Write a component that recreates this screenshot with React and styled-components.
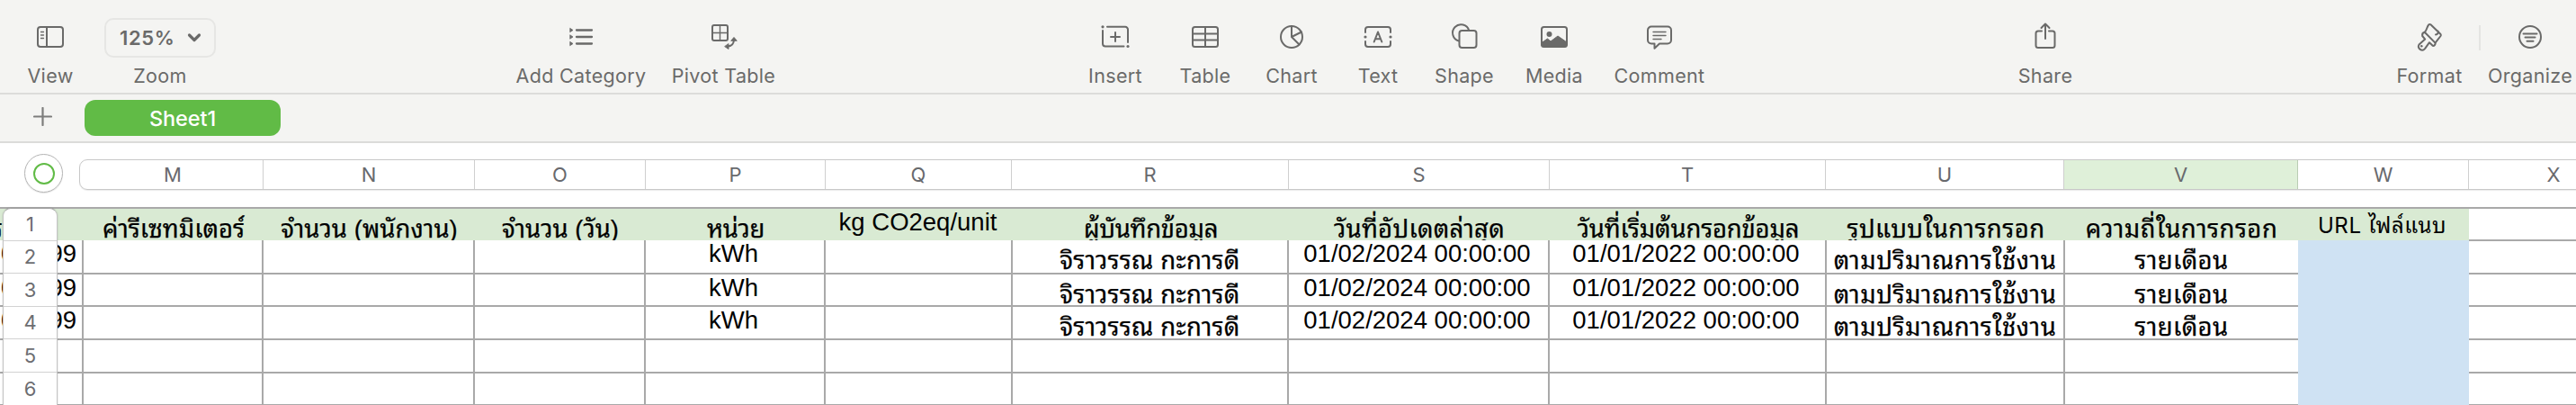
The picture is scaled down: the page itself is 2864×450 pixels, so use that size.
import React from "react";
import styled, { createGlobalStyle } from "styled-components";

const INK = "#6a6a69";
const UI = '"Inter", "Noto Sans Thai Looped", "Liberation Sans", sans-serif';
const CELL = '"Liberation Sans", "Noto Sans Thai Looped", "Noto Sans Thai", sans-serif';

const Global = createGlobalStyle`
  * { box-sizing: border-box; }
  body { margin: 0; background: #fff; overflow: hidden; }
`;

const Window = styled.main`
  width: 2864px;
  height: 450px;
  overflow: hidden;
  background: #fff;
  font-family: ${UI};
`;

const Toolbar = styled.header`
  height: 105px;
  display: flex;
  background: #f4f4f2;
  border-bottom: 2px solid #dcdcda;
`;

const ToolItem = styled.div`
  width: ${(p) => p.$w}px;
  margin-left: ${(p) => p.$gap}px;
  flex: none;
  display: flex;
  flex-direction: column;
  align-items: center;
`;

const IconSlot = styled.div`
  height: 72px;
  padding-top: 20px;
  flex: none;
  svg { display: block; }
`;

const Label = styled.span`
  font-size: 21.5px;
  line-height: 25px;
  letter-spacing: 0.33px;
  color: ${INK};
  white-space: nowrap;
`;

const ZoomButton = styled.div`
  width: 124px;
  height: 44px;
  border: 2px solid #e6e6e4;
  border-radius: 10px;
  display: flex;
  align-items: center;
  padding-left: 15px;
  gap: 14px;
  font-size: 22px;
  font-weight: 600;
  letter-spacing: 0.6px;
  color: ${INK};
`;

const Divider = styled.i`
  width: 2px;
  height: 28px;
  margin: 28px 0 0 18px;
  flex: none;
  background: #e4e4e2;
`;

const TabBar = styled.nav`
  height: 54px;
  display: flex;
  background: #f4f4f2;
  border-bottom: 2px solid #dcdcda;
`;

const AddTab = styled.svg`
  margin: 14px 0 0 37px;
  flex: none;
`;

const Tab = styled.div`
  width: 218px;
  height: 40px;
  margin: 6px 0 0 36px;
  border-radius: 12px;
  background: #61bb46;
  color: #fff;
  font-size: 23.5px;
  font-weight: 500;
  line-height: 41px;
  letter-spacing: -0.1px;
  text-align: center;
`;

const ColumnBar = styled.div`
  height: 71px;
  display: flex;
  padding-top: 12px;
`;

const TableHandle = styled.div`
  width: 43px;
  height: 43px;
  margin-left: 27px;
  flex: none;
  border: 1px solid #b4b4b4;
  border-radius: 50%;
  display: grid;
  place-items: center;
  box-shadow: 0 1px 1px rgba(0, 0, 0, 0.1);
  &::after {
    content: "";
    width: 20px;
    height: 20px;
    border: 2px solid #61bb46;
    border-radius: 50%;
  }
`;

const ColumnHeads = styled.div`
  height: 34px;
  margin: 6px 0 0 18px;
  flex: none;
  display: flex;
  border: 1px solid #c8c8c8;
  border-radius: 9px 0 0 9px;
  box-shadow: 0 1px 1px rgba(0, 0, 0, 0.08);
`;

const ColumnHead = styled.div`
  width: ${(p) => p.$w}px;
  flex: none;
  border-right: 1px solid ${(p) => (p.$active ? "#b9cdb4" : "#cfcfcf")};
  background: ${(p) => (p.$active ? "#dff0d9" : "transparent")};
  font-size: 22px;
  line-height: 33px;
  text-align: center;
  color: #68696d;
  &:first-child { padding-left: 3px; }
`;

const Sheet = styled.section`
  display: flex;
  height: 220px;
`;

const RowHeads = styled.div`
  width: 61px;
  margin: 1px 0 0 3px;
  flex: none;
  z-index: 2;
  background: #fff;
  border: 1px solid #c4c4c4;
  border-width: 1px 1px 0;
  border-top-color: #a0a0a0;
  border-radius: 9px 9px 0 0;
  box-shadow: 0 0 2px rgba(0, 0, 0, 0.18);
`;

const RowHead = styled.div`
  height: ${(p) => p.$h}px;
  border-bottom: 1px solid #d2d2d2;
  font-size: 22px;
  line-height: ${(p) => p.$h - 1}px;
  text-align: center;
  color: #6c6d71;
`;

const Grid = styled.div`
  width: 3000px;
  margin-left: -64px;
  flex: none;
  border-top: 2px solid #a9a9a9;
`;

const Row = styled.div`
  height: ${(p) => p.$h}px;
  display: flex;
`;

const Cell = styled.div`
  width: ${(p) => p.$w}px;
  height: 100%;
  flex: none;
  overflow: hidden;
  padding-top: ${(p) => p.$drop ?? 0}px;
  padding-right: ${(p) => (p.$thai ? 0 : 3)}px;
  border: 0 solid #a9a9a9;
  border-width: ${(p) => (p.$fill ? "0" : p.$last ? "0 0 2px" : "0 2px 2px 0")};
  background: ${(p) => p.$fill || "#fff"};
  font-family: ${(p) => (p.$ui ? UI : CELL)};
  font-size: ${(p) => p.$size || 27.5}px;
  line-height: 30px;
  letter-spacing: ${(p) => p.$ls || 0}px;
  text-align: center;
  white-space: nowrap;
  color: #000;
  -webkit-text-stroke: ${(p) => (p.$thai ? "0.25px #000" : "0")};
`;

const EdgeCell = styled(Cell)`
  text-align: right;
  padding-right: 6px;
`;

const EdgeHead = styled(Cell)`
  text-align: left;
  text-indent: -10px;
`;

const OpenHead = styled(Cell)`
  height: 36px;
  position: relative;
  z-index: 1;
`;

const line = { fill: "none", stroke: INK, strokeWidth: 2, strokeLinecap: "round", strokeLinejoin: "round" };

const Icon = ({ children }) => (
  <svg width="34" height="40" viewBox="0 0 34 40" {...line}>{children}</svg>
);

const icons = {
  view: (
    <Icon>
      <rect x="3" y="10" width="28" height="22" rx="3" />
      <path d="M13 10v22" />
      <path d="M6.5 15.5h3M6.5 19h3M6.5 22.5h3" strokeWidth="1.3" />
    </Icon>
  ),
  category: (
    <Icon>
      <path d="M12 13.5h17M12 21h17M12 28.5h17" strokeWidth="2.3" />
      <path d="M5 11.5l3 2-3 2zM5 19l3 2-3 2zM5 26.5l3 2-3 2z" fill={INK} strokeWidth="0.8" />
    </Icon>
  ),
  pivot: (
    <Icon>
      <rect x="4" y="8" width="17" height="17" rx="2" />
      <path d="M12.5 8v17M4 16.5h17" strokeWidth="1.4" />
      <path d="M20.5 31.5c5.5 0 7.5-2.5 7.5-8" />
      <path d="M25 25l3-3.5 3 3.5zM22 29v5.5l-4-2.7z" fill={INK} strokeWidth="1" />
    </Icon>
  ),
  insert: (
    <Icon>
      <path d="M8 9.8h20a3 3 0 0 1 3 3V27M3 14v14.5a3 3 0 0 0 3 3h20.5M17 16v10M12 21h10" />
      <circle cx="3" cy="9.8" r="1.6" fill={INK} stroke="none" />
      <circle cx="31" cy="31.5" r="1.6" fill={INK} stroke="none" />
    </Icon>
  ),
  table: (
    <Icon>
      <rect x="3" y="10" width="28" height="22" rx="2.5" />
      <path d="M3 17.5h28M3 24.5h28M17 10v22" />
    </Icon>
  ),
  chart: (
    <Icon>
      <circle cx="17" cy="21" r="12" />
      <path d="M17 9v12l8.5 8.5M17 21l11-5.5" />
    </Icon>
  ),
  text: (
    <Icon>
      <path d="M3 16v-3a3 3 0 0 1 3-3h22a3 3 0 0 1 3 3v3M3 26v3a3 3 0 0 0 3 3h22a3 3 0 0 0 3-3v-3" />
      <circle cx="3" cy="21" r="1.6" fill={INK} stroke="none" />
      <circle cx="31" cy="21" r="1.6" fill={INK} stroke="none" />
      <path d="M12.7 26.5L17 15.5l4.3 11M14.2 23.2h5.6" />
    </Icon>
  ),
  shape: (
    <Icon>
      <path d="M11 25.5a9.3 9.3 0 1 1 11.3-11.5" />
      <rect x="11.5" y="14" width="19" height="19" rx="3" />
    </Icon>
  ),
  media: (
    <Icon>
      <rect x="3" y="10" width="28" height="22" rx="2.5" />
      <circle cx="11.5" cy="18" r="3" fill={INK} stroke="none" />
      <path d="M3 30v-2.5l6.5-4.5 3.5 3 8-6 10 7v3a2 2 0 0 1-2 2H5a2 2 0 0 1-2-2z" fill={INK} strokeWidth="1" />
    </Icon>
  ),
  comment: (
    <Icon>
      <path d="M8 9.5h18a4 4 0 0 1 4 4v11a4 4 0 0 1-4 4H17l-5.5 5.3v-5.3H8a4 4 0 0 1-4-4v-11a4 4 0 0 1 4-4z" />
      <path d="M10 15.5h14M10 19.5h14M10 23.5h9" strokeWidth="1.4" />
    </Icon>
  ),
  share: (
    <Icon>
      <path d="M13 14.5H9a2.5 2.5 0 0 0-2.5 2.5v13.5A2.5 2.5 0 0 0 9 33h16a2.5 2.5 0 0 0 2.5-2.5V17a2.5 2.5 0 0 0-2.5-2.5h-4" />
      <path d="M17 23V6.5M12.5 11L17 6.5l4.5 4.5" />
    </Icon>
  ),
  format: (
    <Icon>
      <path d="M11.7 15.8l11.8 11.8c.6 1.6-1.2 3.7-2.8 3.2L17 27.2l-5 7a4 4 0 0 1-6.5-4.6l6.7-6-3-3.6c-.4-2 .8-3.8 2.5-4.2z" />
      <path d="M11.7 15.8c2.5-2 2.3-5.8 4.5-8.3.8-.8 1.5-.7 2.2-.2L29.5 18c.6.8.5 1.3 0 2l-6 7.6M26.8 14.8c.2 1.5-.6 3.5-2.8 3.7" />
      <circle cx="8.3" cy="31.3" r="1.3" fill={INK} stroke="none" />
    </Icon>
  ),
  organize: (
    <Icon>
      <circle cx="17" cy="21" r="12" />
      <path d="M9.5 17.5h15M11.5 21.5h11M13.5 25.8h7" />
    </Icon>
  ),
};

const tools = [
  { name: "Add Category", icon: "category", w: 144, gap: 334 },
  { name: "Pivot Table", icon: "pivot", w: 115, gap: 29 },
  { name: "Insert", icon: "insert", w: 60, gap: 348 },
  { name: "Table", icon: "table", w: 56, gap: 42 },
  { name: "Chart", icon: "chart", w: 58, gap: 39 },
  { name: "Text", icon: "text", w: 44, gap: 45 },
  { name: "Shape", icon: "shape", w: 66, gap: 41 },
  { name: "Media", icon: "media", w: 62, gap: 36 },
  { name: "Comment", icon: "comment", w: 102, gap: 35 },
  { name: "Share", icon: "share", w: 60, gap: 348 },
  { name: "Format", icon: "format", w: 74, gap: 360 },
];

const columns = [
  { id: "M", w: 200, head: 204, title: "ค่ารีเซทมิเตอร์" },
  { id: "N", w: 235, head: 235, title: "จำนวน (พนักงาน)", titleLs: 0.05 },
  { id: "O", w: 190, head: 190, title: "จำนวน (วัน)" },
  { id: "P", w: 200, head: 200, title: "หน่วย", titleLs: -0.3, value: "kWh" },
  { id: "Q", w: 208, head: 207, title: "kg CO2eq/unit", latin: true },
  { id: "R", w: 307, head: 308, title: "ผู้บันทึกข้อมูล", titleLs: -0.3, value: "จิราวรรณ กะการดี", valueLs: 0.25, thai: true },
  { id: "S", w: 290, head: 290, title: "วันที่อัปเดตล่าสุด", titleLs: 0.25, value: "01/02/2024 00:00:00" },
  { id: "T", w: 308, head: 307, title: "วันที่เริ่มต้นกรอกข้อมูล", titleLs: -0.2, value: "01/01/2022 00:00:00" },
  { id: "U", w: 265, head: 265, title: "รูปแบบในการกรอก", titleLs: 0.45, value: "ตามปริมาณการใช้งาน", valueLs: 0.5, thai: true },
  { id: "V", w: 259, head: 260, title: "ความถี่ในการกรอก", titleLs: 0.5, value: "รายเดือน", valueLs: 0.4, thai: true },
  { id: "W", w: 190, head: 190, title: "URL ไฟล์แนบ", titleLs: 0.6, blue: true },
];

const rows = [
  { n: 2, h: 38, filled: true },
  { n: 3, h: 36, filled: true },
  { n: 4, h: 37, filled: true },
  { n: 5, h: 37 },
  { n: 6, h: 36 },
];

const rowHeadHeights = [36, 36, 37, 36, 37, 37];

const titleDrop = (c) => (c.latin ? 0 : c.blue ? 4 : 8);

export default function App() {
  return (
    <Window>
      <Global />
      <Toolbar>
        <ToolItem $w={50} $gap={31}>
          <IconSlot>{icons.view}</IconSlot>
          <Label>View</Label>
        </ToolItem>
        <ToolItem $w={124} $gap={35}>
          <IconSlot>
            <ZoomButton>
              125%
              <svg width="16" height="12" viewBox="0 0 16 12" {...line} strokeWidth="3.2">
                <path d="M2.5 3L8 8.5 13.5 3" />
              </svg>
            </ZoomButton>
          </IconSlot>
          <Label>Zoom</Label>
        </ToolItem>
        {tools.map((t) => (
          <ToolItem key={t.name} $w={t.w} $gap={t.gap}>
            <IconSlot>{icons[t.icon]}</IconSlot>
            <Label>{t.name}</Label>
          </ToolItem>
        ))}
        <Divider />
        <ToolItem $w={94} $gap={8}>
          <IconSlot>{icons.organize}</IconSlot>
          <Label>Organize</Label>
        </ToolItem>
      </Toolbar>

      <TabBar>
        <AddTab width="21" height="21" viewBox="0 0 21 21" stroke="#7d7d7c" strokeWidth="2.2" strokeLinecap="round">
          <path d="M10.5 1v19M1 10.5h19" />
        </AddTab>
        <Tab>Sheet1</Tab>
      </TabBar>

      <ColumnBar>
        <TableHandle />
        <ColumnHeads>
          {columns.map((c) => (
            <ColumnHead key={c.id} $w={c.head} $active={c.id === "V"}>{c.id}</ColumnHead>
          ))}
          <ColumnHead $w={189}>X</ColumnHead>
        </ColumnHeads>
      </ColumnBar>

      <Sheet>
        <RowHeads>
          {rowHeadHeights.map((h, i) => (
            <RowHead key={i} $h={h}>{i + 1}</RowHead>
          ))}
        </RowHeads>
        <Grid>
          <Row $h={35}>
            <EdgeHead $w={93} $fill="#d9ead3" $drop={8} $thai>ร</EdgeHead>
            {columns.map((c) => (
              <Cell
                key={c.id}
                $w={c.w}
                $fill="#d9ead3"
                $drop={titleDrop(c)}
                $size={c.blue ? 24 : 27.5}
                $ls={c.titleLs}
                $ui={c.blue}
                $thai={!c.latin && !c.blue}
              >
                {c.title}
              </Cell>
            ))}
            <OpenHead $w={260} $last />
          </Row>
          {rows.map((r) => (
            <Row key={r.n} $h={r.h}>
              <EdgeCell $w={93}>{r.filled && "0.4999"}</EdgeCell>
              {columns.map((c) => (
                <Cell
                  key={c.id}
                  $w={c.w}
                  $last={c.id === "V"}
                  $fill={c.blue ? "#cfe2f3" : undefined}
                  $drop={c.thai ? 8 : 0}
                  $ls={c.valueLs}
                  $thai={c.thai}
                >
                  {r.filled && c.value}
                </Cell>
              ))}
              <Cell $w={260} $last />
            </Row>
          ))}
        </Grid>
      </Sheet>
    </Window>
  );
}
